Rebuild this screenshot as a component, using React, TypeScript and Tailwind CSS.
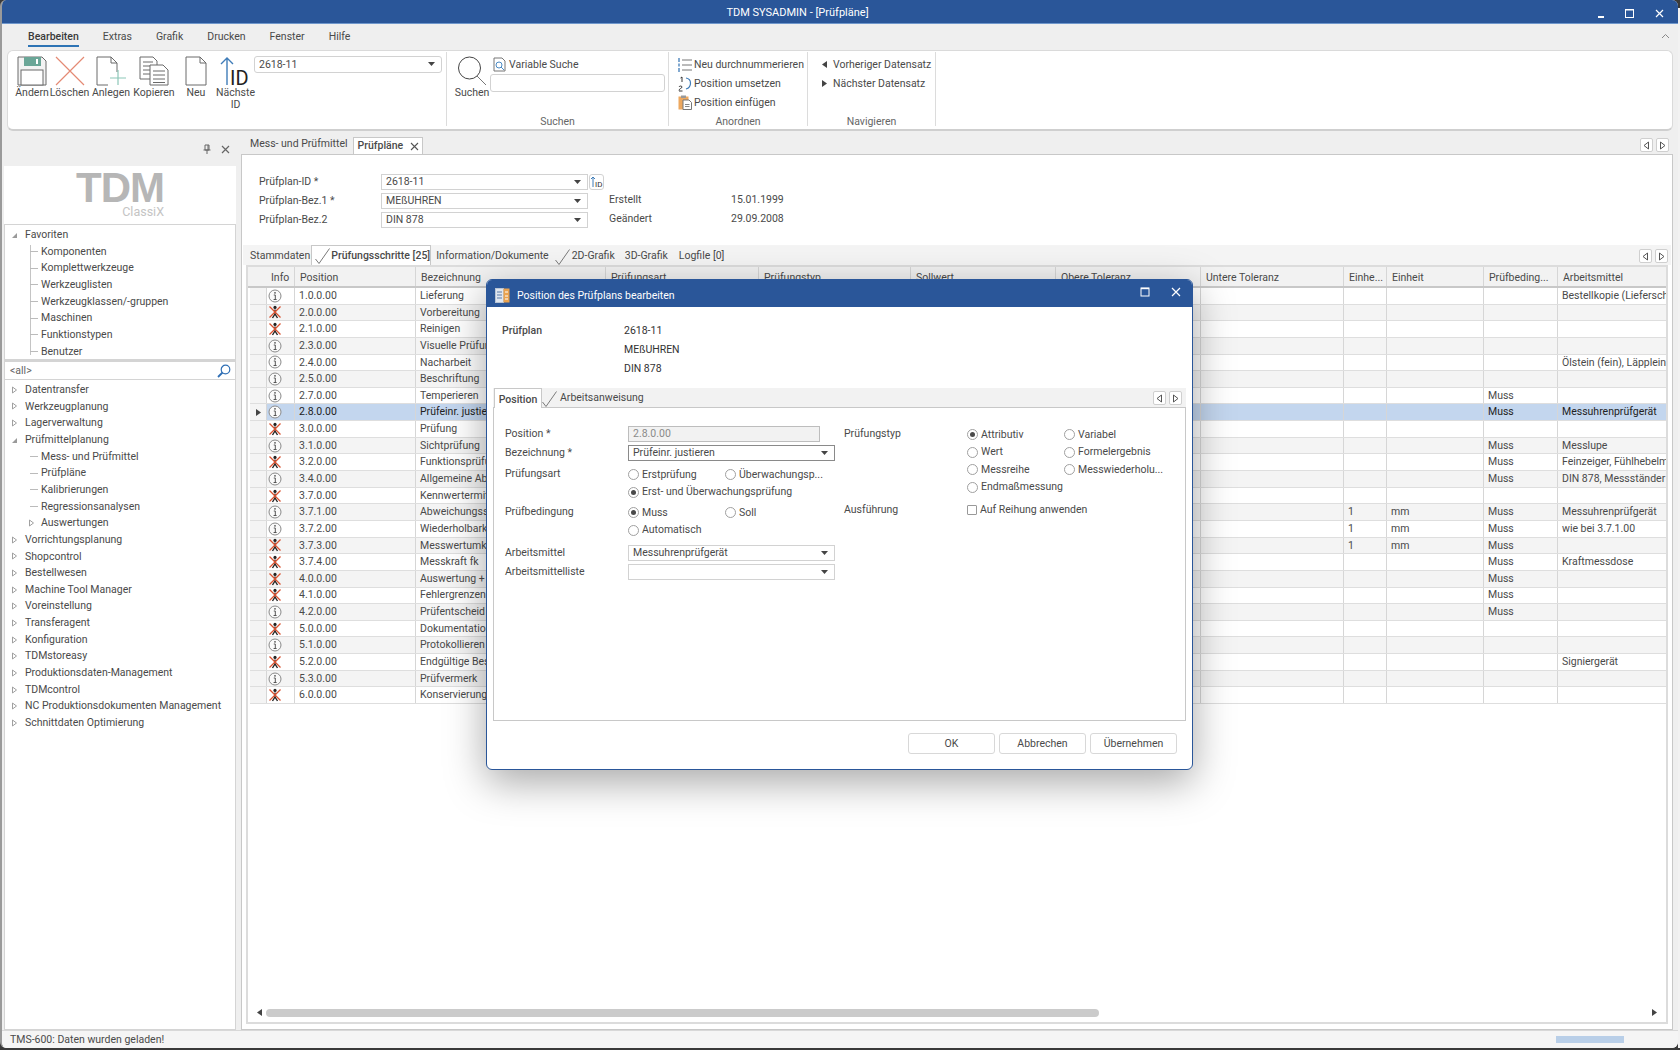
import React from "react";

const columns = ["w-[29px]", "w-[121px]", "w-[190px]", "w-[153px]", "w-[152px]", "w-[145px]", "w-[145px]", "w-[143px]", "w-[43px]", "w-[97px]", "w-[74px]", "w-[109px]"];
const headers = ["Info", "Position", "Bezeichnung", "Prüfungsart", "Prüfungstyp", "Sollwert", "Obere Toleranz", "Untere Toleranz", "Einhe...", "Einheit", "Prüfbeding...", "Arbeitsmittel"];

type Step = { pos: string; name: string; x?: boolean; n?: string; unit?: string; must?: boolean; tool?: string; sel?: boolean };

const steps: Step[] = [
  { pos: "1.0.0.00", name: "Lieferung", tool: "Bestellkopie (Lieferschein)" },
  { pos: "2.0.0.00", name: "Vorbereitung", x: true },
  { pos: "2.1.0.00", name: "Reinigen", x: true },
  { pos: "2.3.0.00", name: "Visuelle Prüfung" },
  { pos: "2.4.0.00", name: "Nacharbeit", tool: "Ölstein (fein), Läppleinen" },
  { pos: "2.5.0.00", name: "Beschriftung" },
  { pos: "2.7.0.00", name: "Temperieren", must: true },
  { pos: "2.8.0.00", name: "Prüfeinr. justieren", must: true, tool: "Messuhrenprüfgerät", sel: true },
  { pos: "3.0.0.00", name: "Prüfung", x: true },
  { pos: "3.1.0.00", name: "Sichtprüfung", must: true, tool: "Messlupe" },
  { pos: "3.2.0.00", name: "Funktionsprüfung", x: true, must: true, tool: "Feinzeiger, Fühlhebelmessgerät" },
  { pos: "3.4.0.00", name: "Allgemeine Abmessungen", must: true, tool: "DIN 878, Messständer mit Halter" },
  { pos: "3.7.0.00", name: "Kennwertermittlung", x: true },
  { pos: "3.7.1.00", name: "Abweichungsspanne", n: "1", unit: "mm", must: true, tool: "Messuhrenprüfgerät" },
  { pos: "3.7.2.00", name: "Wiederholbarkeit", n: "1", unit: "mm", must: true, tool: "wie bei 3.7.1.00" },
  { pos: "3.7.3.00", name: "Messwertumkehrspanne", x: true, n: "1", unit: "mm", must: true },
  { pos: "3.7.4.00", name: "Messkraft fk", x: true, must: true, tool: "Kraftmessdose" },
  { pos: "4.0.0.00", name: "Auswertung + Entscheid", x: true, must: true },
  { pos: "4.1.0.00", name: "Fehlergrenzen", x: true, must: true },
  { pos: "4.2.0.00", name: "Prüfentscheid", must: true },
  { pos: "5.0.0.00", name: "Dokumentation", x: true },
  { pos: "5.1.0.00", name: "Protokollieren" },
  { pos: "5.2.0.00", name: "Endgültige Beschriftung", x: true, tool: "Signiergerät" },
  { pos: "5.3.0.00", name: "Prüfvermerk" },
  { pos: "6.0.0.00", name: "Konservierung", x: true },
];

const favorites = ["Komponenten", "Komplettwerkzeuge", "Werkzeuglisten", "Werkzeugklassen/-gruppen", "Maschinen", "Funktionstypen", "Benutzer"];
const treeBefore = ["Datentransfer", "Werkzeugplanung", "Lagerverwaltung"];
const planChildren = ["Mess- und Prüfmittel", "Prüfpläne", "Kalibrierungen", "Regressionsanalysen"];
const treeAfter = ["Vorrichtungsplanung", "Shopcontrol", "Bestellwesen", "Machine Tool Manager", "Voreinstellung", "Transferagent", "Konfiguration", "TDMstoreasy", "Produktionsdaten-Management", "TDMcontrol", "NC Produktionsdokumenten Management", "Schnittdaten Optimierung"];

function InfoIcon() {
  return (
    <svg width="14" height="14" viewBox="0 0 14 14" fill="none">
      <circle cx="7" cy="7" r="6" stroke="#8a8a8a" fill="#fafafa" />
      <path d="M5.8 6h1.5v4.4M5.6 10.5h3" stroke="#555" />
      <circle cx="7" cy="3.8" r="0.9" fill="#555" />
    </svg>
  );
}

function StepIcon() {
  return (
    <svg width="14" height="14" viewBox="0 0 14 14" fill="none">
      <circle cx="7" cy="2.4" r="1.6" fill="#222" />
      <path d="M7 4.5v5M4.5 13l2.5-4 2.5 4" stroke="#222" strokeWidth="1.4" />
      <path d="M1.5 1.5l11 11M12.5 1.5l-11 11" stroke="#d9502e" strokeWidth="1.3" />
    </svg>
  );
}

function Caret({ dir = "down", className = "" }: { dir?: "down" | "left" | "right"; className?: string }) {
  const d = dir === "down" ? "M0 1h7L3.5 5z" : dir === "left" ? "M6 0v7L1 3.5z" : "M1 0v7l5-3.5z";
  return (
    <svg width="7" height="7" viewBox="0 0 7 7" className={`shrink-0 ${className}`}>
      <path d={d} fill="#444" />
    </svg>
  );
}

function Combo({ value, className = "" }: { value: string; className?: string }) {
  return (
    <div className={`flex items-center justify-between pl-[4px] pr-[6px] bg-white border border-[#d2d2d2] ${className}`}>
      <span>{value}</span>
      <Caret />
    </div>
  );
}

function NavButtons({ className = "" }: { className?: string }) {
  return (
    <div className={`flex gap-[3px] ${className}`}>
      <div className="w-[13px] h-[14px] bg-white border border-[#cfcfcf] rounded-[2px] flex items-center justify-center">
        <svg width="7" height="9" viewBox="0 0 7 9"><path d="M5.5 1v7L1 4.5z" fill="#fff" stroke="#555" /></svg>
      </div>
      <div className="w-[13px] h-[14px] bg-white border border-[#cfcfcf] rounded-[2px] flex items-center justify-center">
        <svg width="7" height="9" viewBox="0 0 7 9"><path d="M1.5 1v7L6 4.5z" fill="#fff" stroke="#555" /></svg>
      </div>
    </div>
  );
}

function Check() {
  return (
    <svg width="15" height="16" viewBox="0 0 15 16" fill="none" className="shrink-0">
      <path d="M0.5 11l3.5 4.500L14.500 0.500" stroke="#7a7a7a" />
    </svg>
  );
}

function Radio({ label, on = false, className = "" }: { label: string; on?: boolean; className?: string }) {
  return (
    <div className={`flex items-center gap-[2px] ${className}`}>
      <span className="w-[11px] h-[11px] rounded-full border border-[#a0a0a0] bg-white flex items-center justify-center shrink-0 mr-[1px]">
        {on && <span className="w-[5px] h-[5px] rounded-full bg-[#4a4a4a]" />}
      </span>
      <span className="whitespace-nowrap">{label}</span>
    </div>
  );
}

function BigButton({ label, icon, className = "" }: { label: React.ReactNode; icon: React.ReactNode; className?: string }) {
  return (
    <div className={`flex flex-col items-center shrink-0 ${className}`}>
      <div className="h-[30px] flex items-end justify-center">{icon}</div>
      <div className="mt-[1px] text-center leading-[12px] whitespace-nowrap">{label}</div>
    </div>
  );
}

function Ribbon() {
  return (
    <div className="mx-[5px] h-[81px] bg-white rounded-[6px] border border-[#dadada] border-b-2 border-b-[#cfcfcf] flex">
      <div className="w-[439px] flex pl-[3px] pt-[4px] border-r border-[#dcdcdc] my-[1px] mb-[3px]">
        <BigButton className="w-[42px]" label="Ändern" icon={
          <svg width="30" height="30" viewBox="0 0 30 30" fill="none">
            <path d="M1 1h24l4 4v24H1z" fill="#f3f3f3" stroke="#6a6a6a" />
            <rect x="7" y="1" width="17" height="9" fill="#6aa697" />
            <rect x="19" y="3" width="2" height="5" fill="#fff" />
            <rect x="4" y="14" width="22" height="15" fill="#fff" stroke="#6a6a6a" />
          </svg>
        } />
        <BigButton className="w-[35px] ml-[-1px]" label="Löschen" icon={
          <svg width="30" height="30" viewBox="0 0 30 30" fill="none">
            <path d="M1 1l28 28M29 1L1 29" stroke="#e48a74" strokeWidth="1.2" />
          </svg>
        } />
        <BigButton className="w-[42px] ml-[3px]" label="Anlegen" icon={
          <svg width="30" height="30" viewBox="0 0 30 30" fill="none">
            <path d="M12 29H1V1h14l6 6v9M15 1v6h6" stroke="#6a6a6a" />
            <path d="M14 22h16M22 14v15" stroke="#8cc7b8" strokeWidth="1.2" />
          </svg>
        } />
        <BigButton className="w-[42px] ml-[1px]" label="Kopieren" icon={
          <svg width="30" height="30" viewBox="0 0 30 30" fill="none">
            <path d="M1 1h13l4 4v18H1z" fill="#fff" stroke="#6a6a6a" />
            <path d="M4 6h10M4 10h10M4 14h10M4 18h10" stroke="#6a6a6a" />
            <path d="M11 9h13l5 5v15H11z" fill="#fff" stroke="#6a6a6a" />
            <path d="M14 15h12M14 19h12M14 23h12M14 26.500h12" stroke="#6a6a6a" />
          </svg>
        } />
        <BigButton className="w-[36px] ml-[3px]" label="Neu" icon={
          <svg width="22" height="30" viewBox="0 0 22 30" fill="none">
            <path d="M1 1h14l6 6v22H1zM15 1v6h6" stroke="#6a6a6a" fill="#fff" />
          </svg>
        } />
        <BigButton className="w-[45px] ml-[-1px]" label={<>Nächste<br />ID</>} icon={
          <svg width="32" height="30" viewBox="0 0 32 30" fill="none">
            <path d="M7 29V2M1 8l6-6 6 6" stroke="#3f7cb8" strokeWidth="1.4" />
            <text x="10" y="29" fontSize="20" fill="#222" fontFamily="Roboto, sans-serif">ID</text>
          </svg>
        } />
        <Combo value="2618-11" className="w-[188px] h-[17px] rounded-[3px] ml-[-4px]" />
      </div>
      <div className="w-[222px] flex flex-col border-r border-[#dcdcdc] my-[1px] mb-[3px]">
        <div className="flex flex-1 pt-[5px] pl-[7px]">
          <BigButton className="w-[36px] -mt-[1px]" label="Suchen" icon={
            <svg width="30" height="30" viewBox="0 0 30 30" fill="none">
              <circle cx="12.500" cy="12" r="11" stroke="#444" fill="#fff" />
              <path d="M20 20l9 9" stroke="#777" />
            </svg>
          } />
          <div>
            <div className="flex items-center h-[15px] pl-[3px]">
              <svg width="13" height="15" viewBox="0 0 13 15" fill="none">
                <path d="M1 1h8l3 3v10H1z" stroke="#777" fill="#fff" />
                <circle cx="6" cy="8" r="3" stroke="#4a8ac4" />
                <path d="M8 10l3 3" stroke="#4a8ac4" />
              </svg>
              <span className="ml-[3px]">Variable Suche</span>
            </div>
            <div className="w-[175px] h-[18px] mt-[2px] border border-[#d2d2d2] rounded-[3px] bg-white" />
          </div>
        </div>
        <div className="h-[11px] text-center text-[#666] leading-[13px]">Suchen</div>
      </div>
      <div className="w-[139px] flex flex-col border-r border-[#dcdcdc] my-[1px] mb-[3px]">
        <div className="flex-1 pl-[9px] pt-[3px]">
          <div className="flex items-center h-[19px]">
            <svg width="14" height="16" viewBox="0 0 14 16" fill="none" className="shrink-0">
              <path d="M4 3h10M4 8h10M4 13h10" stroke="#777" />
              <path d="M1 1v4M1 6.500v3M1 11v4" stroke="#3f7cb8" strokeWidth="1.3" />
            </svg>
            <span className="ml-[2px] whitespace-nowrap">Neu durchnummerieren</span>
          </div>
          <div className="flex items-center h-[19px]">
            <svg width="14" height="16" viewBox="0 0 14 16" fill="none" className="shrink-0">
              <path d="M2.500 2L4 1v5M1 14.500c0-2 3-2 3-3.500s-3-1-3 0M1 15h3.500" stroke="#222" strokeWidth="0.9" />
              <path d="M8 2c6 1 6 9 0 11" stroke="#3f7cb8" strokeWidth="1.2" />
            </svg>
            <span className="ml-[2px] whitespace-nowrap">Position umsetzen</span>
          </div>
          <div className="flex items-center h-[19px]">
            <svg width="14" height="15" viewBox="0 0 14 15" fill="none" className="shrink-0">
              <rect x="0.500" y="1.500" width="10" height="13" fill="#eda85f" />
              <rect x="3" y="0.500" width="5" height="2.500" fill="#999" />
              <path d="M5 5h6l2.500 2.500v7H5z" fill="#fff" stroke="#777" />
              <path d="M7 9.500h4.500M7 11.500h4.500" stroke="#888" />
            </svg>
            <span className="ml-[2px] whitespace-nowrap">Position einfügen</span>
          </div>
        </div>
        <div className="h-[11px] text-center text-[#666] leading-[13px]">Anordnen</div>
      </div>
      <div className="w-[128px] flex flex-col border-r border-[#dcdcdc] my-[1px] mb-[3px]">
        <div className="flex-1 pl-[13px] pt-[3px]">
          <div className="flex items-center h-[19px]">
            <Caret dir="left" />
            <span className="ml-[5px] whitespace-nowrap">Vorheriger Datensatz</span>
          </div>
          <div className="flex items-center h-[19px]">
            <Caret dir="right" />
            <span className="ml-[5px] whitespace-nowrap">Nächster Datensatz</span>
          </div>
        </div>
        <div className="h-[11px] text-center text-[#666] leading-[13px]">Navigieren</div>
      </div>
    </div>
  );
}

function Triangle({ open = false }: { open?: boolean }) {
  return (
    <svg width="7" height="8" viewBox="0 0 7 8" className="shrink-0" fill="none">
      {open ? <path d="M6 2v5H1z" fill="#9a9a9a" /> : <path d="M1.500 1v6l4-3z" stroke="#a0a0a0" fill="#fff" />}
    </svg>
  );
}

function TreeTop({ label, open = false }: { label: string; open?: boolean }) {
  return (
    <div className="flex items-center h-[16.67px] pl-[6px]">
      <Triangle open={open} />
      <span className="ml-[7px] whitespace-nowrap">{label}</span>
    </div>
  );
}

function TreeChild({ label, triangle = false }: { label: string; triangle?: boolean }) {
  return (
    <div className="flex items-center h-[16.67px] pl-[25px] relative">
      {triangle ? (
        <span className="w-[10px] -ml-[2px] mr-[3px] flex"><Triangle /></span>
      ) : (
        <span className="w-[8px] h-px bg-[#bbb] mr-[3px]" />
      )}
      <span className="whitespace-nowrap">{label}</span>
    </div>
  );
}

function Sidebar() {
  return (
    <div className="w-[232px] ml-[2px] flex flex-col shrink-0">
      <div className="h-[35px] flex items-start justify-end pt-[13px] pr-[6px] gap-[9px]">
        <svg width="10" height="11" viewBox="0 0 10 11" fill="none">
          <path d="M3 1h4v5H3zM1.500 6h7M5 6v4M6 1v5" stroke="#666" />
        </svg>
        <svg width="9" height="11" viewBox="0 0 9 11" fill="none">
          <path d="M1 2l7 7M8 2L1 9" stroke="#666" strokeWidth="1.2" />
        </svg>
      </div>
      <div className="h-[58px] bg-white flex flex-col items-end pr-[72px]">
        <div className="font-['Liberation_Sans',sans-serif] font-bold text-[#b6b6b6] text-[42px] leading-[34px] tracking-[-1px] mt-[5px]">TDM</div>
        <div className="text-[#c4c4c4] text-[12.500px] leading-[14px]">ClassiX</div>
      </div>
      <div className="h-[136px] bg-white border border-[#d4d4d4] pt-[1.500px] relative">
        <TreeTop label="Favoriten" open />
        <div className="absolute left-[25px] top-[20px] w-px h-[110px] bg-[#c4c4c4]" />
        {favorites.map((f) => <TreeChild key={f} label={f} />)}
      </div>
      <div className="h-[20px] bg-white border border-t-2 border-[#d4d4d4] flex items-center justify-between pl-[5px] pr-[4px]">
        <span className="text-[#666]">&lt;all&gt;</span>
        <svg width="14" height="14" viewBox="0 0 14 14" fill="none">
          <circle cx="8.500" cy="5.500" r="4.300" stroke="#2f6fb5" strokeWidth="1.2" />
          <path d="M5.500 8.500L1 13" stroke="#2f6fb5" strokeWidth="1.8" />
        </svg>
      </div>
      <div className="flex-1 bg-white border border-t-0 border-[#d4d4d4] pt-[1.500px]">
        {treeBefore.map((t) => <TreeTop key={t} label={t} />)}
        <TreeTop label="Prüfmittelplanung" open />
        {planChildren.map((t) => <TreeChild key={t} label={t} />)}
        <TreeChild label="Auswertungen" triangle />
        {treeAfter.map((t) => <TreeTop key={t} label={t} />)}
      </div>
    </div>
  );
}

function GridRow({ step, odd }: { step: Step; odd: boolean }) {
  const bg = step.sel ? "bg-[#c3d6ee]" : odd ? "bg-[#f4f4f4]" : "bg-white";
  const text = step.sel ? "text-[#222]" : "";
  const values = ["", step.pos, step.name, "", "", "", "", "", step.n ?? "", step.unit ?? "", step.must ? "Muss" : "", step.tool ?? ""];
  return (
    <div className={`flex h-[16.65px] border-b border-[#dedede] ${bg} ${text}`}>
      <div className="w-[16px] bg-[#f4f4f4] flex items-center justify-center shrink-0">
        {step.sel && <Caret dir="right" />}
      </div>
      {values.map((v, i) => (
        <div key={i} className={`${columns[i]} shrink-0 border-r border-[#d6d6d6] overflow-hidden whitespace-nowrap flex items-center ${i === 0 ? "pl-[1px] border-l" : "pl-[4px]"}`}>
          {i === 0 ? (step.x ? <StepIcon /> : <InfoIcon />) : v}
        </div>
      ))}
    </div>
  );
}

function StepsGrid() {
  return (
    <div className="flex-1 mx-[4px] mb-[5px] border-2 border-[#dcdcdc] bg-white flex flex-col min-h-0 overflow-hidden">
      <div className="flex h-[21px] bg-[#f2f2f2] border-b-2 border-[#c8c8c8] pl-[2px] shrink-0">
        <div className="w-[16px] shrink-0" />
        {headers.map((h, i) => (
          <div key={h} className={`${columns[i]} shrink-0 border-r border-[#d6d6d6] flex items-center pl-[5px] pt-[2px] whitespace-nowrap overflow-hidden`}>{h}</div>
        ))}
      </div>
      <div className="pl-[2px] flex-1">
        {steps.map((s, i) => <GridRow key={s.pos} step={s} odd={i % 2 === 1} />)}
      </div>
      <div className="h-[15px] flex items-center px-[8px] mb-[2px] shrink-0">
        <Caret dir="left" />
        <div className="flex-1 flex ml-[3px] mr-[4px]">
          <div className="w-[833px] h-[8px] rounded-full bg-[#cbcbcb]" />
        </div>
        <Caret dir="right" />
      </div>
    </div>
  );
}

function MainPanel() {
  return (
    <div className="flex-1 ml-[5px] mr-[5px] flex flex-col min-w-0">
      <div className="h-[23px] flex items-end pl-[9px] relative">
        <span className="mb-[2px] mr-[5px] whitespace-nowrap">Mess- und Prüfmittel</span>
        <div className="h-[17px] w-[70px] bg-white border border-b-0 border-[#c8c8c8] flex items-center pl-[4px] font-medium">
          <span>Prüfpläne</span>
          <svg width="9" height="9" viewBox="0 0 9 9" className="ml-auto mr-[3px]" fill="none"><path d="M1 1l7 7M8 1L1 8" stroke="#555" strokeWidth="1.1" /></svg>
        </div>
        <NavButtons className="ml-auto mb-[2px] mr-[4px]" />
      </div>
      <div className="flex-1 bg-white border border-[#c8c8c8] flex flex-col min-h-0">
        <div className="h-[90px] pl-[17px] pt-[19px] flex shrink-0">
          <div className="w-[122px] leading-[19px] -mt-[2px]">
            <div>Prüfplan-ID *</div>
            <div>Prüfplan-Bez.1 *</div>
            <div>Prüfplan-Bez.2</div>
          </div>
          <div className="flex flex-col gap-[3px]">
            <div className="flex">
              <Combo value="2618-11" className="w-[207px] h-[16px]" />
              <div className="w-[15px] h-[16px] ml-[1px] rounded-[3px] border border-[#d2d2d2] flex items-center justify-center">
                <svg width="13" height="12" viewBox="0 0 13 12" fill="none">
                  <path d="M3 11V1M1 3l2-2 2 2" stroke="#3f7cb8" />
                  <text x="5" y="11" fontSize="8" fill="#333" fontFamily="Roboto, sans-serif">ID</text>
                </svg>
              </div>
            </div>
            <Combo value="MEßUHREN" className="w-[207px] h-[16px]" />
            <Combo value="DIN 878" className="w-[207px] h-[16px]" />
          </div>
          <div className="ml-[5px] mt-[16px] leading-[19px] w-[122px]">
            <div>Erstellt</div>
            <div>Geändert</div>
          </div>
          <div className="mt-[16px] leading-[19px]">
            <div>15.01.1999</div>
            <div>29.09.2008</div>
          </div>
        </div>
        <div className="h-[20px] flex items-end pl-[4px] shrink-0 bg-[#f4f4f4] mx-[1px] leading-[14px]">
          <span className="mb-[2px] ml-[3px] mr-[1px] whitespace-nowrap">Stammdaten</span>
          <div className="h-[20px] w-[120px] bg-white border border-b-0 border-[#c8c8c8] flex items-center pl-[3px] font-medium">
            <Check />
            <span className="ml-[1px] whitespace-nowrap">Prüfungsschritte [25]</span>
          </div>
          <span className="mb-[2px] ml-[5px] mr-[6px] whitespace-nowrap">Information/Dokumente</span>
          <Check />
          <span className="mb-[2px] ml-[2px] mr-[10px] whitespace-nowrap">2D-Grafik</span>
          <span className="mb-[2px] mr-[11px] whitespace-nowrap">3D-Grafik</span>
          <span className="mb-[2px] whitespace-nowrap">Logfile [0]</span>
          <NavButtons className="ml-auto mb-[2px] mr-[3px]" />
        </div>
        <StepsGrid />
      </div>
    </div>
  );
}

function FormLabel({ children }: { children: React.ReactNode }) {
  return <div className="w-[123px] shrink-0">{children}</div>;
}

function PositionDialog() {
  return (
    <div className="absolute left-[486px] top-[279px] w-[707px] h-[491px] bg-white rounded-[6px] border border-[#2a5699] shadow-[0_12px_40px_rgba(0,0,0,0.35)] flex flex-col">
      <div className="h-[27px] bg-[#2a5699] rounded-t-[5px] flex items-center pl-[8px] pr-[11px] pt-[4px] text-white shrink-0">
        <svg width="15" height="15" viewBox="0 0 15 15">
          <rect x="0.500" y="0.500" width="8" height="14" fill="#dfe6f0" stroke="#b8c4d4" />
          <rect x="8.500" y="0.500" width="6" height="14" fill="#eaa24e" />
          <path d="M2 4h5M2 7h5M2 10h5" stroke="#5a7ba8" strokeWidth="1.2" />
          <path d="M10 4h3M10 8h3M10 11h3" stroke="#fff" />
        </svg>
        <span className="ml-[7px]">Position des Prüfplans bearbeiten</span>
        <svg width="10" height="10" viewBox="0 0 10 10" className="ml-auto mb-[7px]" fill="none">
          <rect x="1" y="1" width="8" height="8" stroke="#fff" />
          <path d="M1 1.500h8" stroke="#fff" strokeWidth="1.4" />
        </svg>
        <svg width="10" height="10" viewBox="0 0 10 10" className="ml-[21px] mb-[7px]" fill="none">
          <path d="M1 1l8 8M9 1L1 9" stroke="#fff" strokeWidth="1.2" />
        </svg>
      </div>
      <div className="h-[81px] pt-[14px] pl-[15px] flex leading-[19px] shrink-0">
        <div className="w-[122px] font-medium">Prüfplan</div>
        <div className="text-[#333]">
          <div>2618-11</div>
          <div>MEßUHREN</div>
          <div>DIN 878</div>
        </div>
      </div>
      <div className="mx-[6px] h-[20px] bg-[#f2f2f2] border-b border-[#c8c8c8] flex items-end shrink-0">
        <div className="h-[20px] w-[48px] ml-[1px] bg-white border border-b-0 border-[#c8c8c8] flex items-center justify-center font-medium -mb-px pt-[2px]">Position</div>
        <Check />
        <span className="mb-[1px] ml-[3px]">Arbeitsanweisung</span>
        <NavButtons className="ml-auto mb-[2px] mr-[4px]" />
      </div>
      <div className="mx-[6px] h-[313px] border border-t-0 border-[#c8c8c8] flex pl-[11px] pt-[18px] shrink-0">
        <div className="w-[339px] shrink-0">
          <div className="flex items-center h-[16px]">
            <FormLabel>Position *</FormLabel>
            <div className="w-[192px] h-[16px] bg-[#f2f2f2] border border-[#bdbdbd] pl-[4px] text-[#8a8a8a] flex items-center">2.8.0.00</div>
          </div>
          <div className="flex items-center h-[16px] mt-[3px]">
            <FormLabel>Bezeichnung *</FormLabel>
            <Combo value="Prüfeinr. justieren" className="w-[207px] h-[16px] !border-[#8a8a8a]" />
          </div>
          <div className="flex mt-[5px]">
            <FormLabel>Prüfungsart</FormLabel>
            <div className="w-[207px]">
              <div className="flex h-[17.500px] items-center">
                <Radio label="Erstprüfung" className="w-[97px]" />
                <Radio label="Überwachungsp..." />
              </div>
              <div className="flex h-[17.500px] items-center">
                <Radio label="Erst- und Überwachungsprüfung" on />
              </div>
            </div>
          </div>
          <div className="flex mt-[3px]">
            <FormLabel>Prüfbedingung</FormLabel>
            <div className="w-[207px]">
              <div className="flex h-[17.500px] items-center">
                <Radio label="Muss" on className="w-[97px]" />
                <Radio label="Soll" />
              </div>
              <div className="flex h-[17.500px] items-center">
                <Radio label="Automatisch" />
              </div>
            </div>
          </div>
          <div className="flex items-center h-[16px] mt-[6px]">
            <FormLabel>Arbeitsmittel</FormLabel>
            <Combo value="Messuhrenprüfgerät" className="w-[207px] h-[16px]" />
          </div>
          <div className="flex items-center h-[16px] mt-[3px]">
            <FormLabel>Arbeitsmittelliste</FormLabel>
            <Combo value="" className="w-[207px] h-[16px]" />
          </div>
        </div>
        <div className="flex-1">
          <div className="flex">
            <div className="w-[123px] shrink-0">Prüfungstyp</div>
            <div>
              <div className="flex h-[17.500px] items-center">
                <Radio label="Attributiv" on className="w-[97px]" />
                <Radio label="Variabel" />
              </div>
              <div className="flex h-[17.500px] items-center">
                <Radio label="Wert" className="w-[97px]" />
                <Radio label="Formelergebnis" />
              </div>
              <div className="flex h-[17.500px] items-center">
                <Radio label="Messreihe" className="w-[97px]" />
                <Radio label="Messwiederholu..." />
              </div>
              <div className="flex h-[17.500px] items-center">
                <Radio label="Endmaßmessung" />
              </div>
            </div>
          </div>
          <div className="flex mt-[6px] items-center">
            <div className="w-[123px] shrink-0">Ausführung</div>
            <span className="w-[10px] h-[10px] border border-[#999] rounded-[1px] bg-white mr-[3px]" />
            <span>Auf Reihung anwenden</span>
          </div>
        </div>
      </div>
      <div className="flex justify-end gap-[4px] pr-[15px] mt-[12px]">
        {["OK", "Abbrechen", "Übernehmen"].map((b) => (
          <div key={b} className="w-[87px] h-[21px] border border-[#d8d8d8] rounded-[3px] bg-white flex items-center justify-center">{b}</div>
        ))}
      </div>
    </div>
  );
}

export default function App() {
  return (
    <div className="relative w-[1680px] h-[1050px] overflow-hidden bg-[#3a3a3a] font-['Roboto',sans-serif] text-[10.500px] text-[#4a4a4a] flex">
      <div className="w-[1678px] h-[1048px] bg-[#efefef] rounded-[6px] overflow-hidden flex flex-col border-l-2 border-[#9a9a9a] shrink-0">
        <div className="h-[24px] bg-[#2a5699] border-b border-[#6f97cc] flex items-center justify-center relative text-white shrink-0 pt-[3px] pr-[85px]">
          <span className="text-[11px]">TDM SYSADMIN - [Prüfpläne]</span>
          <div className="absolute right-[14px] top-[9px] flex items-center gap-[21px]">
            <div className="w-[6px] h-[2px] bg-white mt-[7px]" />
            <svg width="9" height="9" viewBox="0 0 9 9" fill="none"><rect x="0.500" y="0.500" width="8" height="8" stroke="#fff" /><path d="M0 1h9" stroke="#fff" /></svg>
            <svg width="9" height="9" viewBox="0 0 9 9" fill="none"><path d="M1 1l7 7M8 1L1 8" stroke="#fff" strokeWidth="1.2" /></svg>
          </div>
        </div>
        <div className="h-[26px] flex items-start pl-[26px] pt-[5px] gap-[24px] relative shrink-0 leading-[15px]">
          <span className="font-medium border-b-2 border-[#2e74b5] h-[18px] text-[#3a3a3a]">Bearbeiten</span>
          <span>Extras</span>
          <span>Grafik</span>
          <span>Drucken</span>
          <span>Fenster</span>
          <span>Hilfe</span>
          <svg width="9" height="6" viewBox="0 0 9 6" fill="none" className="absolute right-[8px] top-[9px]"><path d="M1 5l3.500-3.500L8 5" stroke="#888" /></svg>
        </div>
        <Ribbon />
        <div className="flex flex-1 min-h-0">
          <Sidebar />
          <MainPanel />
        </div>
        <div className="h-[18px] flex items-center pl-[8px] pr-[54px] bg-[#f5f5f5] border-t border-[#d8d8d8] shrink-0">
          <span>TMS-600: Daten wurden geladen!</span>
          <div className="ml-auto w-[68px] h-[7px] bg-[#b9cfe8]" />
        </div>
      </div>
      <div className="w-[2px] h-[1040px] mt-[8px] bg-[#f2f2f2]" />
      <PositionDialog />
    </div>
  );
}
